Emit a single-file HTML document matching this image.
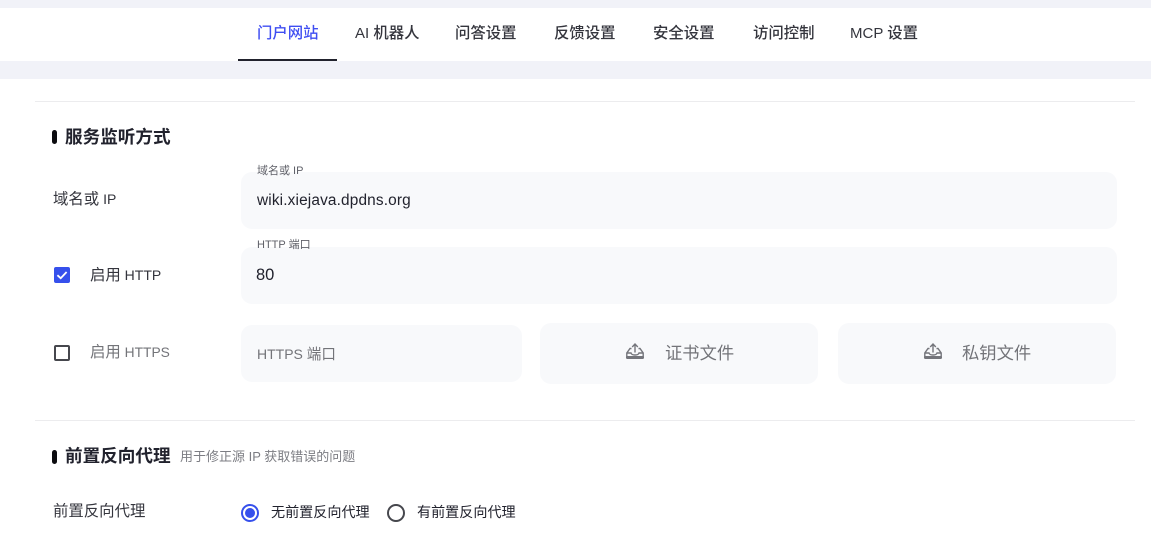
<!DOCTYPE html>
<html lang="zh-CN">
<head>
<meta charset="utf-8">
<style>
html,body{margin:0;padding:0;background:#fff;}
body{width:1151px;height:556px;overflow:hidden;position:relative;font-family:"Liberation Sans","Noto Sans CJK SC",sans-serif;color:#21222d;}
.a{position:absolute;white-space:nowrap;}
.bg{position:absolute;left:0;width:1151px;background:#f1f2f8;}
.tab{position:absolute;top:24px;height:20px;line-height:20px;font-size:15.4px;color:#34353d;white-space:nowrap;font-weight:500;}
.tab i{font-size:15px;}
.line{position:absolute;left:35px;width:1100px;height:1px;background:#ececee;}
.box{position:absolute;background:#f8f9fb;border-radius:11px;}
.bar{position:absolute;left:52px;width:5px;height:14px;border-radius:2.5px;background:#0c0c10;}
.h{position:absolute;left:65px;font-size:17.6px;font-weight:700;line-height:22px;color:#21222d;white-space:nowrap;}
.lab{position:absolute;font-size:15.4px;line-height:20px;white-space:nowrap;color:#34353d;}
.small{position:absolute;left:257px;font-size:11px;line-height:12px;color:#5f6068;white-space:nowrap;}
.val{position:absolute;left:257px;font-size:15.4px;line-height:20px;white-space:nowrap;color:#21222d;}
.gr{color:#737479;}
i{font-style:normal;font-size:14px;}
</style>
</head>
<body>
<div class="bg" style="top:0;height:8px"></div>
<div class="bg" style="top:61px;height:18px"></div>
<div class="a" style="left:238px;top:59px;width:99px;height:2px;background:#21222d"></div>

<div class="tab" style="left:257px;color:#3f4ef2">门户网站</div>
<div class="tab" style="left:355px"><i>AI </i>机器人</div>
<div class="tab" style="left:455px">问答设置</div>
<div class="tab" style="left:554px">反馈设置</div>
<div class="tab" style="left:653px">安全设置</div>
<div class="tab" style="left:753px">访问控制</div>
<div class="tab" style="left:850px"><i>MCP </i>设置</div>

<div class="line" style="top:101px"></div>
<div class="bar" style="top:130px"></div>
<div class="h" style="top:126px;">服务监听方式</div>

<div class="lab" style="left:53px;top:189px">域名或<i> IP</i></div>
<div class="box" style="left:241px;top:172px;width:876px;height:57px"></div>
<div class="small" style="top:165px">域名或 IP</div>
<div class="val" style="top:191px;letter-spacing:.15px">wiki.xiejava.dpdns.org</div>

<div class="a" style="left:54px;top:267px;width:16px;height:16px;background:#3650ec;border-radius:2px">
<svg width="16" height="16" viewBox="0 0 16 16" style="display:block"><path d="M3.4 8.2L6.700 11.200L12.600 5" fill="none" stroke="#fff" stroke-width="1.800"/></svg>
</div>
<div class="lab" style="left:90px;top:265px">启用<i> HTTP</i></div>
<div class="box" style="left:241px;top:247px;width:876px;height:57px"></div>
<div class="small" style="top:239px">HTTP 端口</div>
<div class="val" style="top:265px;font-size:16.5px;left:256px">80</div>

<div class="a" style="left:54px;top:345px;width:12px;height:12px;border:2px solid #46474d;border-radius:2px"></div>
<div class="lab gr" style="left:90px;top:343px">启用<i style="font-size:13.8px"> HTTPS</i></div>
<div class="box" style="left:241px;top:325px;width:281px;height:57px"></div>
<div class="val gr" style="top:344px;font-size:14.6px"><i>HTTPS </i>端口</div>

<div class="box" style="left:540px;top:323px;width:278px;height:61px"></div>
<svg class="a" style="left:625px;top:342px" width="20" height="18" viewBox="0 0 20 18"><path d="M6.500 6.500H5L1.800 11V15.500H18.200V11L15 6.500H13.500M1.800 11H6Q6.500 13 10 13T14 11H18.200M10 10.500V2.500M7.200 5L10 2L12.800 5" fill="none" stroke="#74757b" stroke-width="1.400"/><rect x="1" y="14" width="18" height="3" rx="1.200" fill="#74757b"/></svg>
<div class="a gr" style="left:665px;top:342px;font-size:17.3px;line-height:22px">证书文件</div>

<div class="box" style="left:838px;top:323px;width:278px;height:61px"></div>
<svg class="a" style="left:923px;top:342px" width="20" height="18" viewBox="0 0 20 18"><path d="M6.500 6.500H5L1.800 11V15.500H18.200V11L15 6.500H13.500M1.800 11H6Q6.500 13 10 13T14 11H18.200M10 10.500V2.500M7.200 5L10 2L12.800 5" fill="none" stroke="#74757b" stroke-width="1.400"/><rect x="1" y="14" width="18" height="3" rx="1.200" fill="#74757b"/></svg>
<div class="a gr" style="left:962px;top:342px;font-size:17.3px;line-height:22px">私钥文件</div>

<div class="line" style="top:420px"></div>
<div class="bar" style="top:450px"></div>
<div class="h" style="top:445px;">前置反向代理</div>
<div class="a" style="left:180px;top:448px;font-size:13px;line-height:18px;color:#7c7d83">用于修正源 IP 获取错误的问题</div>

<div class="lab" style="left:53px;top:502px">前置反向代理</div>
<div class="a" style="left:241px;top:504px;width:14px;height:14px;border:2px solid #3650ec;border-radius:50%"></div>
<div class="a" style="left:245px;top:508px;width:10px;height:10px;background:#3650ec;border-radius:50%"></div>
<div class="a" style="left:271px;top:502px;font-size:14.1px;line-height:20px;color:#21222d;">无前置反向代理</div>
<div class="a" style="left:387px;top:504px;width:14px;height:14px;border:2px solid #46474d;border-radius:50%"></div>
<div class="a" style="left:417px;top:502px;font-size:14.1px;line-height:20px;color:#21222d;">有前置反向代理</div>
</body>
</html>
